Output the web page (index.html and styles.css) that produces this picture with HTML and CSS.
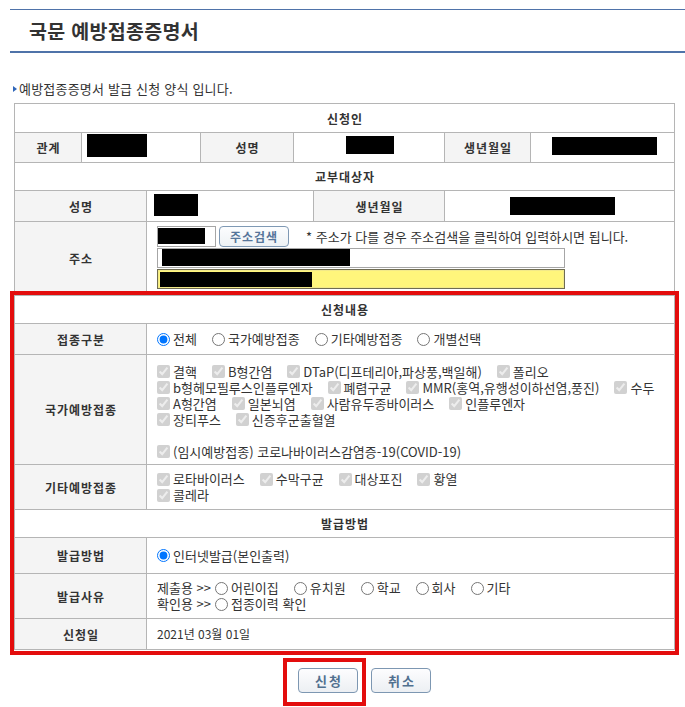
FILE: index.html
```html
<!DOCTYPE html>
<html lang="ko">
<head>
<meta charset="utf-8">
<title>국문 예방접종증명서</title>
<link rel="stylesheet" href="styles.css">
</head>
<body>
<div class="page">
  <div class="title-bar"><h1 class="title">국문 예방접종증명서</h1></div>
  <p class="intro">예방접종증명서 발급 신청 양식 입니다.</p>

  <div class="tbl">
    <div class="row head h28">신청인</div>
    <div class="row r-six h29">
      <div class="lab">관계</div>
      <div class="val free"><span class="redact r1a"></span></div>
      <div class="lab">성명</div>
      <div class="val free"><span class="redact r1b"></span></div>
      <div class="lab">생년월일</div>
      <div class="val free"><span class="redact r1c"></span></div>
    </div>
    <div class="row head h27">교부대상자</div>
    <div class="row r-four h30">
      <div class="lab">성명</div>
      <div class="val free"><span class="redact r2a"></span></div>
      <div class="lab">생년월일</div>
      <div class="val free"><span class="redact r2b"></span></div>
    </div>
    <div class="row r-two h73">
      <div class="lab">주소</div>
      <div class="val addr">
        <div class="addr-line">
          <span class="field zip"><span class="redact rz"></span></span>
          <button class="btn-s" type="button">주소검색</button>
          <span class="note">* 주소가 다를 경우 주소검색을 클릭하여 입력하시면 됩니다.</span>
        </div>
        <span class="field wide"><span class="redact ra1"></span></span>
        <span class="field wide hl"><span class="redact ra2"></span></span>
      </div>
    </div>

    <div class="row head h27">신청내용</div>
    <div class="row r-two h30">
      <div class="lab">접종구분</div>
      <div class="val">
        <label class="opt"><input type="radio" name="kind" checked>전체</label>
        <label class="opt"><input type="radio" name="kind">국가예방접종</label>
        <label class="opt"><input type="radio" name="kind">기타예방접종</label>
        <label class="opt"><input type="radio" name="kind">개별선택</label>
      </div>
    </div>
    <div class="row r-two h109">
      <div class="lab">국가예방접종</div>
      <div class="val lines nat">
        <div class="line">
          <label class="opt"><input type="checkbox" checked disabled>결핵</label>
          <label class="opt"><input type="checkbox" checked disabled>B형간염</label>
          <label class="opt"><input type="checkbox" checked disabled>DTaP(디프테리아,파상풍,백일해)</label>
          <label class="opt"><input type="checkbox" checked disabled>폴리오</label>
        </div>
        <div class="line">
          <label class="opt"><input type="checkbox" checked disabled>b형헤모필루스인플루엔자</label>
          <label class="opt"><input type="checkbox" checked disabled>폐렴구균</label>
          <label class="opt"><input type="checkbox" checked disabled>MMR(홍역,유행성이하선염,풍진)</label>
          <label class="opt"><input type="checkbox" checked disabled>수두</label>
        </div>
        <div class="line">
          <label class="opt"><input type="checkbox" checked disabled>A형간염</label>
          <label class="opt"><input type="checkbox" checked disabled>일본뇌염</label>
          <label class="opt"><input type="checkbox" checked disabled>사람유두종바이러스</label>
          <label class="opt"><input type="checkbox" checked disabled>인플루엔자</label>
        </div>
        <div class="line">
          <label class="opt"><input type="checkbox" checked disabled>장티푸스</label>
          <label class="opt"><input type="checkbox" checked disabled>신증후군출혈열</label>
        </div>
        <div class="line"></div>
        <div class="line">
          <label class="opt"><input type="checkbox" checked disabled>(임시예방접종) 코로나바이러스감염증-19(COVID-19)</label>
        </div>
      </div>
    </div>
    <div class="row r-two h44">
      <div class="lab">기타예방접종</div>
      <div class="val lines">
        <div class="line">
          <label class="opt"><input type="checkbox" checked disabled>로타바이러스</label>
          <label class="opt"><input type="checkbox" checked disabled>수막구균</label>
          <label class="opt"><input type="checkbox" checked disabled>대상포진</label>
          <label class="opt"><input type="checkbox" checked disabled>황열</label>
        </div>
        <div class="line">
          <label class="opt"><input type="checkbox" checked disabled>콜레라</label>
        </div>
      </div>
    </div>

    <div class="row head h27">발급방법</div>
    <div class="row r-two h35">
      <div class="lab">발급방법</div>
      <div class="val">
        <label class="opt"><input type="radio" name="method" checked>인터넷발급(본인출력)</label>
      </div>
    </div>
    <div class="row r-two h44">
      <div class="lab">발급사유</div>
      <div class="val lines">
        <div class="line">
          <span class="lead">제출용 &gt;&gt;</span>
          <label class="opt"><input type="radio" name="reason">어린이집</label>
          <label class="opt"><input type="radio" name="reason">유치원</label>
          <label class="opt"><input type="radio" name="reason">학교</label>
          <label class="opt"><input type="radio" name="reason">회사</label>
          <label class="opt"><input type="radio" name="reason">기타</label>
        </div>
        <div class="line">
          <span class="lead">확인용 &gt;&gt;</span>
          <label class="opt"><input type="radio" name="reason">접종이력 확인</label>
        </div>
      </div>
    </div>
    <div class="row r-two h30">
      <div class="lab">신청일</div>
      <div class="val date">2021년 03월 01일</div>
    </div>
  </div>

  <div class="actions">
    <button class="btn" type="button">신청</button>
    <button class="btn" type="button">취소</button>
  </div>

  <div class="mark mark-form"></div>
  <div class="mark mark-btn"></div>
</div>
</body>
</html>
```

FILE: styles.css
```css
* { box-sizing: border-box; }

body {
  margin: 0;
  font-family: "Noto Sans CJK KR", "Noto Sans", sans-serif;
  font-size: 12px;
  color: #333;
  background: #fff;
}

.page {
  position: relative;
  width: 685px;
  height: 707px;
  padding: 9px 0 0 10px;
  overflow: hidden;
}

.title-bar {
  height: 44px;
  border-top: 1px solid #4f73a9;
  border-bottom: 2px solid #4f73a9;
  display: flex;
  align-items: center;
  padding-left: 19px;
}

.title {
  margin: 0;
  font-size: 19.5px;
  font-weight: 700;
  line-height: 1;
  letter-spacing: 0.3px;
  color: #333;
}

.intro {
  margin: 28px 0 6px 3px;
  height: 16px;
  line-height: 16px;
  font-size: 13px;
  letter-spacing: 0.2px;
  display: flex;
  align-items: center;
}

.intro::before {
  content: "";
  width: 0;
  height: 0;
  border-left: 4px solid #2f66b9;
  border-top: 3px solid transparent;
  border-bottom: 3px solid transparent;
  margin-right: 2px;
}

/* table */
.tbl {
  margin-left: 4px;
  width: 661px;
  background: #b5b5b5;
  padding: 1px;
  display: flex;
  flex-direction: column;
  gap: 1px;
}

.row { display: grid; gap: 1px; }
.r-six { grid-template-columns: 66px 118px 92px 150px 85px 143px; }
.r-four { grid-template-columns: 131px 166px 130px 229px; }
.r-two { grid-template-columns: 131px 527px; }

.h27 { height: 27px; }
.h28 { height: 28px; }
.h29 { height: 29px; }
.h30 { height: 30px; }
.h35 { height: 35px; }
.h44 { height: 44px; }
.h73 { height: 73px; }
.h109 { height: 109px; }

.head {
  background: #fff;
  display: flex;
  align-items: center;
  justify-content: center;
  font-weight: 700;
  letter-spacing: 1px;
  padding-left: 1px;
}

.lab {
  background: #f4f4f4;
  display: flex;
  align-items: center;
  justify-content: center;
  font-weight: 700;
  letter-spacing: 1px;
  padding-left: 1px;
}

.val {
  background: #fff;
  display: flex;
  align-items: center;
  padding-left: 10px;
  white-space: nowrap;
  font-size: 13px;
  line-height: 16px;
}

.val.date { font-size: 12px; }

.val.free { align-items: flex-start; padding-left: 0; }

.redact { display: block; background: #000; }
.r1a { width: 60px; height: 23px; margin: 1px 0 0 5px; }
.r1b { width: 48px; height: 18px; margin: 3px 0 0 52px; }
.r1c { width: 105px; height: 18px; margin: 4px 0 0 21px; }
.r2a { width: 44px; height: 22px; margin: 3px 0 0 7px; }
.r2b { width: 105px; height: 18px; margin: 6px 0 0 65px; }

/* address */
.val.addr {
  flex-direction: column;
  align-items: flex-start;
  justify-content: flex-start;
  padding-top: 4px;
}

.addr-line {
  display: flex;
  align-items: center;
  height: 21px;
}

.field {
  display: block;
  border: 1px solid #a6a6a6;
  background: #fff;
}

.zip { width: 59px; height: 21px; }
.rz { width: 47px; height: 16px; margin-top: 1px; }

.btn-s {
  margin-left: 3px;
  width: 70px;
  height: 21px;
  padding: 0;
  border: 1px solid #7f99b4;
  border-radius: 4px;
  background: linear-gradient(#fcfdfe, #eef2f5);
  color: #56759a;
  font-family: "Noto Sans CJK KR", sans-serif;
  font-size: 12px;
  line-height: 16px;
  font-weight: 700;
  letter-spacing: 1px;
}

.note { margin-left: 17px; }

.wide { width: 408px; height: 20px; margin-top: 1px; }
.ra1 { width: 188px; height: 17px; margin-left: 4px; }

.wide.hl {
  background: #fff67c;
  border-color: #6f6c52;
  box-shadow: inset 0 0 0 1px #f2e98a;
}
.ra2 { width: 152px; height: 15px; margin: 2px 0 0 2px; }

/* options */
.opt {
  display: inline-flex;
  align-items: center;
  margin-right: 15px;
  white-space: nowrap;
  line-height: 16px;
}

.opt input {
  width: 13px;
  height: 13px;
  margin: 0 3px 0 0;
}

.val.lines {
  flex-direction: column;
  align-items: flex-start;
  justify-content: center;
}

.val.nat { padding-top: 4px; }

.line {
  display: flex;
  align-items: center;
  height: 16px;
}

.lead { margin-right: 4px; }

/* buttons */
.actions {
  display: flex;
  gap: 13px;
  margin-top: 18px;
  padding-left: 288px;
}

.btn {
  width: 60px;
  height: 25px;
  padding: 0 0 0 2px;
  border: 1px solid #7d97b2;
  border-radius: 4px;
  background: linear-gradient(#fdfdfe, #eceff3);
  color: #51708f;
  font-family: "Noto Sans CJK KR", sans-serif;
  font-size: 13px;
  line-height: 16px;
  font-weight: 700;
  letter-spacing: 2px;
}

/* red annotation boxes drawn over the form */
.mark {
  position: absolute;
  border: 4px solid #e30d0d;
  pointer-events: none;
}

.mark-form { left: 10px; top: 291px; width: 669px; height: 364px; }
.mark-btn { left: 283px; top: 658px; width: 83px; height: 48px; }
```
